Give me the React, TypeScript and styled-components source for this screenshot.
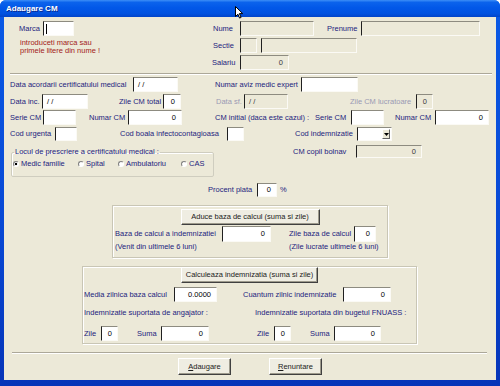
import styled, { createGlobalStyle } from 'styled-components'
import { ReactNode } from 'react'

/**
 * "Adaugare CM" dialog: XP-style form for adding a medical certificate
 */

type Item = [number, ReactNode]

const FONT = '"Liberation Sans", Arial, sans-serif'

function Line({
  from,
  items,
  h = 15,
  mt = 0,
}: {
  from: number
  items: Item[]
  h?: number
  mt?: number
}) {
  return (
    <Row $h={h} $mt={mt} $ml={items[0][0] - from}>
      {items.map(([x, node], i) => (
        <Cell key={i} $w={items[i + 1] ? items[i + 1][0] - x : undefined}>
          {node}
        </Cell>
      ))}
    </Row>
  )
}

const Radio = ({ label, on }: { label: string; on?: boolean }) => (
  <RadioWrap>
    <RadioDot $on={on} />
    <Label>{label}</Label>
  </RadioWrap>
)

const Select = ({ w }: { w: number }) => (
  <Field $w={w}>
    <DropBtn>
      <svg width="5" height="3" viewBox="0 0 5 3">
        <path d="M0 0h5L2.5 3z" fill="#000" />
      </svg>
    </DropBtn>
  </Field>
)

export default function App() {
  return (
    <>
      <GlobalStyle />
      <Window>
        <TitleBar>Adaugare CM</TitleBar>
        <Cursor width="9" height="13" viewBox="0 0 9 13">
          <path
            d="M0.5 0.5v10l2.4-2.3 1.7 3.9 1.5-.7-1.7-3.8h3.3z"
            fill="#fff"
            stroke="#000"
            strokeWidth="1"
            strokeLinejoin="round"
          />
        </Cursor>
        <Body>
          <Top>
            <LeftCol>
              <Line
                from={4}
                items={[
                  [19, <Label>Marca</Label>],
                  [43, <Field $w={31}><Caret /></Field>],
                ]}
              />
              <Note>
                introduceti marca sau
                <br />
                primele litere din nume !
              </Note>
            </LeftCol>
            <RightCol>
              <Line
                from={208}
                items={[
                  [213, <Label>Nume</Label>],
                  [240, <Field $w={74} $off />],
                  [327, <Label>Prenume</Label>],
                  [361, <Field $w={119} $off />],
                ]}
              />
              <Line
                from={208}
                mt={2}
                items={[
                  [213, <Label>Sectie</Label>],
                  [240, <Field $w={17} $off />],
                  [261, <Field $w={96} $off />],
                ]}
              />
              <Line
                from={208}
                mt={2}
                items={[
                  [212, <Label>Salariu</Label>],
                  [240, <Field $w={49} $off $right>0</Field>],
                ]}
              />
            </RightCol>
          </Top>
          <Separator $ml={6} $mr={4} $mt={3} />
          <Line
            from={4}
            mt={2}
            items={[
              [10, <Label>Data acordarii certificatului medical</Label>],
              [133, <Field $w={45}>/ /</Field>],
              [215, <Label>Numar aviz medic expert</Label>],
              [301, <Field $w={57} />],
            ]}
          />
          <Line
            from={4}
            mt={2}
            items={[
              [10, <Label>Data inc.</Label>],
              [42, <Field $w={46}>/ /</Field>],
              [119, <Label>Zile CM total</Label>],
              [163, <Field $w={18} $right>0</Field>],
              [216, <Label $off>Data sf.</Label>],
              [244, <Field $w={44} $off>/ /</Field>],
              [350, <Label $off>Zile CM lucratoare</Label>],
              [416, <Field $w={17} $off $right>0</Field>],
            ]}
          />
          <Line
            from={4}
            mt={1}
            items={[
              [10, <Label>Serie CM</Label>],
              [43, <Field $w={33} />],
              [89, <Label>Numar CM</Label>],
              [128, <Field $w={54} $right>0</Field>],
              [215, <Label>CM initial (daca este cazul) :</Label>],
              [315, <Label>Serie CM</Label>],
              [351, <Field $w={33} />],
              [395, <Label>Numar CM</Label>],
              [435, <Field $w={54} $right>0</Field>],
            ]}
          />
          <Line
            from={4}
            mt={2}
            h={14}
            items={[
              [10, <Label>Cod urgenta</Label>],
              [55, <Field $w={22} />],
              [120, <Label>Cod boala infectocontagioasa</Label>],
              [227, <Field $w={17} />],
              [295, <Label>Cod indemnizatie</Label>],
              [357, <Select w={35} />],
            ]}
          />
          <Middle>
            <Place>
              <legend>Locul de prescriere a certificatului medical :</legend>
              <Line
                from={12}
                h={10}
                mt={3}
                items={[
                  [13, <Radio label="Medic familie" on />],
                  [78, <Radio label="Spital" />],
                  [118, <Radio label="Ambulatoriu" />],
                  [181, <Radio label="CAS" />],
                ]}
              />
            </Place>
            <Line
              from={214}
              h={13}
              items={[
                [293, <Label>CM copil bolnav</Label>],
                [356, <Field $w={66} $off $right>0</Field>],
              ]}
            />
          </Middle>
          <Line
            from={4}
            mt={6}
            h={14}
            items={[
              [208, <Label>Procent plata</Label>],
              [257, <Field $w={20} $right>0</Field>],
              [280, <Label>%</Label>],
            ]}
          />
          <Group $mt={8} $ml={108} $w={276} $h={53}>
            <ButtonRow $mt={3}>
              <Button $w={139}>Aduce baza de calcul (suma si zile)</Button>
            </ButtonRow>
            <Line
              from={113}
              mt={1}
              h={16}
              items={[
                [115, <Label>Baza de calcul a indemnizatiei</Label>],
                [222, <Field $w={49} $right>0</Field>],
                [289, <Label>Zile baza de calcul</Label>],
                [354, <Field $w={22} $right>0</Field>],
              ]}
            />
            <Line
              from={113}
              mt={1}
              h={8}
              items={[
                [115, <Label>(Venit din ultimele 6 luni)</Label>],
                [289, <Label>(Zile lucrate ultimele 6 luni)</Label>],
              ]}
            />
          </Group>
          <Group $mt={8} $ml={78} $w={335} $h={78}>
            <ButtonRow $mt={0}>
              <Button $w={137}>Calculeaza indemnizatia (suma si zile)</Button>
            </ButtonRow>
            <Line
              from={83}
              mt={4}
              items={[
                [84, <Label>Media zilnica baza calcul</Label>],
                [174, <Field $w={43} $right>0.0000</Field>],
                [243, <Label>Cuantum zilnic indemnizatie</Label>],
                [343, <Field $w={48} $right>0</Field>],
              ]}
            />
            <Line
              from={83}
              mt={7}
              h={8}
              items={[
                [84, <Label>Indemnizatie suportata de angajator :</Label>],
                [255, <Label>Indemnizatie suportata din bugetul FNUASS :</Label>],
              ]}
            />
            <Line
              from={83}
              mt={9}
              items={[
                [84, <Label>Zile</Label>],
                [101, <Field $w={17} $right>0</Field>],
                [137, <Label>Suma</Label>],
                [161, <Field $w={48} $right>0</Field>],
                [257, <Label>Zile</Label>],
                [274, <Field $w={17} $right>0</Field>],
                [310, <Label>Suma</Label>],
                [334, <Field $w={47} $right>0</Field>],
              ]}
            />
          </Group>
          <Separator $ml={8} $mr={9} $mt={8} />
          <Line
            from={4}
            mt={4}
            h={17}
            items={[
              [178, <Button $w={53}><u>A</u>daugare</Button>],
              [269, <Button $w={53}><u>R</u>enuntare</Button>],
            ]}
          />
        </Body>
      </Window>
    </>
  )
}

const GlobalStyle = createGlobalStyle`
  html, body {
    margin: 0;
    padding: 0;
    background: #fff;
  }
  body {
    font-family: 'Liberation Sans', Arial, sans-serif;
  }
`

const Window = styled.div({
  position: 'relative',
  width: '500px',
  height: '386px',
  display: 'flex',
  flexDirection: 'column',
  background: 'linear-gradient(180deg, #0a5ae6 0%, #0848d4 60%, #0634b8 100%)',
  borderRadius: '6px 6px 0 0',
  overflow: 'hidden',
})

const TitleBar = styled.div({
  flex: 'none',
  height: '17px',
  boxSizing: 'border-box',
  padding: '4px 0 0 6px',
  background:
    'linear-gradient(180deg, #3d8ff7 0%, #0b63ec 14%, #0258e8 45%, #0152e0 80%, #0244c8 100%)',
  color: '#fff',
  font: `bold 8px/10px ${FONT}`,
  textShadow: '1px 1px 0 #0a2a90',
})

const Cursor = styled.svg({
  position: 'absolute',
  left: '235px',
  top: '6px',
})

const Body = styled.div({
  flex: 1,
  margin: '0 4px 6px',
  background: '#ECE9D8',
  display: 'flex',
  flexDirection: 'column',
})

const Row = styled.div<{ $h: number; $mt: number; $ml: number }>(
  ({ $h, $mt, $ml }) => ({
    flex: 'none',
    display: 'flex',
    alignItems: 'center',
    height: `${$h}px`,
    marginTop: `${$mt}px`,
    marginLeft: `${$ml}px`,
  })
)

const Cell = styled.div<{ $w?: number }>(({ $w }) => ({
  flex: 'none',
  width: $w !== undefined ? `${$w}px` : 'auto',
  height: '100%',
  display: 'flex',
  alignItems: 'center',
}))

const Label = styled.span<{ $off?: boolean }>(({ $off }) => ({
  whiteSpace: 'nowrap',
  font: `7.5px/8px ${FONT}`,
  color: $off ? '#9a9ab4' : '#23237e',
}))

const Field = styled.div<{ $w: number; $off?: boolean; $right?: boolean }>(
  ({ $w, $off, $right }) => ({
    position: 'relative',
    boxSizing: 'border-box',
    width: `${$w}px`,
    height: '100%',
    display: 'flex',
    alignItems: 'center',
    justifyContent: $right ? 'flex-end' : 'flex-start',
    padding: $right ? '0 5px 0 0' : '0 0 0 4px',
    background: $off ? '#ECE9D8' : '#fff',
    borderTop: '1px solid #8d8b80',
    borderLeft: '1px solid #202020',
    borderRight: '1px solid #fbfaf5',
    borderBottom: '1px solid #fbfaf5',
    font: `7.5px/8px ${FONT}`,
    color: $off ? '#3a3a3a' : '#000',
  })
)

const Caret = styled.span({
  width: '1px',
  height: '10px',
  marginLeft: '-2px',
  background: '#000',
})

const DropBtn = styled.span({
  position: 'absolute',
  right: '1px',
  top: '1px',
  bottom: '1px',
  width: '8px',
  boxSizing: 'border-box',
  background: '#ECE9D8',
  border: '1px solid',
  borderColor: '#fff #606060 #606060 #fff',
  display: 'flex',
  alignItems: 'center',
  justifyContent: 'center',
})

const Top = styled.div({
  display: 'flex',
  marginTop: '4px',
})

const LeftCol = styled.div({
  width: '204px',
  display: 'flex',
  flexDirection: 'column',
})

const RightCol = styled.div({
  display: 'flex',
  flexDirection: 'column',
})

const Note = styled.div({
  marginTop: '3px',
  marginLeft: '16px',
  font: `7.5px/7.5px ${FONT}`,
  color: '#a31b1b',
})

const Separator = styled.div<{ $ml: number; $mr: number; $mt: number }>(
  ({ $ml, $mr, $mt }) => ({
    flex: 'none',
    height: 0,
    margin: `${$mt}px ${$mr}px 0 ${$ml}px`,
    borderTop: '1px solid #aca899',
    borderBottom: '1px solid #fff',
  })
)

const Middle = styled.div({
  display: 'flex',
  alignItems: 'flex-start',
  marginTop: '4px',
})

const Place = styled.fieldset({
  flex: 'none',
  boxSizing: 'border-box',
  width: '203px',
  height: '29px',
  margin: '3px 0 0 7px',
  padding: 0,
  minInlineSize: 0,
  border: '1px solid #cfcdbf',
  borderRadius: '2px',
  boxShadow: 'inset 1px 1px 0 #fff',

  '> legend': {
    marginLeft: '2px',
    padding: '0 1px',
    font: `7.5px/8px ${FONT}`,
    color: '#23237e',
  },
})

const RadioWrap = styled.span({
  display: 'flex',
  alignItems: 'center',
  gap: '2px',
})

const RadioDot = styled.span<{ $on?: boolean }>(({ $on }) => ({
  boxSizing: 'border-box',
  width: '6px',
  height: '6px',
  borderRadius: '50%',
  border: '1px solid',
  borderColor: '#808080 #fff #fff #808080',
  background: $on
    ? 'radial-gradient(circle, #000 0 1.3px, #fff 1.6px)'
    : '#fff',
}))

const Group = styled.div<{ $mt: number; $ml: number; $w: number; $h: number }>(
  ({ $mt, $ml, $w, $h }) => ({
    flex: 'none',
    boxSizing: 'border-box',
    width: `${$w}px`,
    height: `${$h}px`,
    margin: `${$mt}px 0 0 ${$ml}px`,
    border: '1px solid #c9c6b5',
    boxShadow: 'inset 1px 1px 0 #fff, 1px 1px 0 #fff',
    display: 'flex',
    flexDirection: 'column',
  })
)

const ButtonRow = styled.div<{ $mt: number }>(({ $mt }) => ({
  display: 'flex',
  justifyContent: 'center',
  marginTop: `${$mt}px`,
  height: '16px',
}))

const Button = styled.div<{ $w: number }>(({ $w }) => ({
  boxSizing: 'border-box',
  width: `${$w}px`,
  height: '100%',
  display: 'flex',
  alignItems: 'center',
  justifyContent: 'center',
  background: '#efede2',
  border: '1px solid',
  borderColor: '#fff #404040 #404040 #fff',
  boxShadow: 'inset -1px -1px 0 #9d9a8c',
  font: `7.5px/8px ${FONT}`,
  color: '#1b1b1b',
  whiteSpace: 'nowrap',
}))
